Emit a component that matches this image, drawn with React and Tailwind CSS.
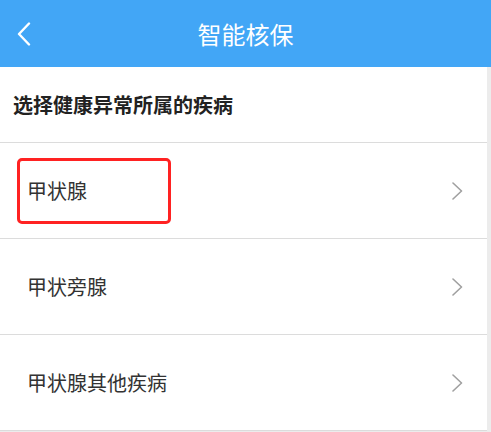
import React from "react";

const items = ["甲状腺", "甲状旁腺", "甲状腺其他疾病"];

function Chevron({ color = "#a0a0a0", w = 11, h = 18, sw = 1.6 }) {
  return (
    <svg width={w} height={h} viewBox={`0 0 ${w} ${h}`} fill="none">
      <polyline
        points={`1,1 ${w - 1.5},${h / 2} 1,${h - 1}`}
        stroke={color}
        strokeWidth={sw}
        strokeLinecap="round"
        strokeLinejoin="round"
      />
    </svg>
  );
}

export default function App() {
  return (
    <div
      className="w-[491px] h-[432px] bg-[#ececec] overflow-hidden"
      style={{ fontFamily: '"Noto Sans CJK SC", "Noto Sans", sans-serif' }}
    >
      <header className="h-[67px] bg-[#42a6f6] grid grid-cols-[60px_1fr_60px] items-center">
        <div className="pl-[17px] flex items-center">
          <svg width="14" height="24" viewBox="0 0 14 24" fill="none">
            <polyline
              points="12,1.5 2,12 12,22.5"
              stroke="#ffffff"
              strokeWidth="2.4"
              strokeLinecap="round"
              strokeLinejoin="round"
            />
          </svg>
        </div>
        <h1 className="text-center text-white text-[24px] leading-none">智能核保</h1>
        <div />
      </header>

      <div className="mr-[4px] bg-white">
        <div className="h-[76px] border-b border-[#dcdcdc] flex items-center pl-[13px]">
          <span className="text-[20px] font-bold text-[#222]">选择健康异常所属的疾病</span>
        </div>

        {items.map((label, i) => (
          <div
            key={label}
            className="relative h-[96px] border-b border-[#dcdcdc] flex items-center justify-between pl-[27px] pr-[24px]"
          >
            <span className="text-[20px] text-[#333]">{label}</span>
            <Chevron />
            {i === 0 && (
              <div className="absolute left-[17px] top-[15px] w-[154px] h-[66px] border-[3px] border-[#ff2222] rounded-[5px]" />
            )}
          </div>
        ))}
      </div>
    </div>
  );
}
